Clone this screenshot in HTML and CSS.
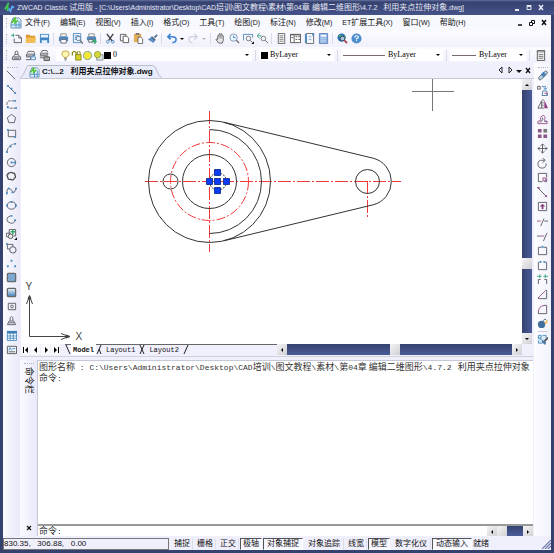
FILE: index.html
```html
<!DOCTYPE html>
<html lang="zh-CN">
<head>
    <meta charset="UTF-8">
    <meta name="viewport" content="width=device-width, initial-scale=1.0">
    <title>ZWCAD Classic</title>
    <link rel="stylesheet" href="styles.css">
</head>
<body>

<div class="window">
    <header class="title-bar">
        <svg class="logo" viewBox="0 0 12 12"><path d="M1 8l3-5v7M4 3l1-2" stroke="#3fc452" stroke-width="2" fill="none"/><path d="M5 7l2 3 2-5 2 1" stroke="#59a9ee" stroke-width="2" fill="none"/></svg>
        <h1><span class="latin">ZWCAD Classic </span>试用版<span class="latin"> - [C:\Users\Administrator\Desktop\CAD</span>培训<span class="latin">\</span>图文教程<span class="latin">\</span>素材<span class="latin">\</span>第<span class="latin">04</span>章 编辑二维图形<span class="latin">\4.7.2 &nbsp; </span>利用夹点拉伸对象<span class="latin">.dwg]</span></h1>
        <div class="window-buttons">
            <button type="button" aria-label="Minimize"><svg viewBox="0 0 8 8"><path d="M2 6h4" stroke="currentColor" stroke-width="2"/></svg></button>
            <button type="button" aria-label="Maximize"><svg viewBox="0 0 8 8"><path d="M2 2.5h4v3H2z" stroke="currentColor" fill="none"/><path d="M1.5 1.5h5" stroke="currentColor"/></svg></button>
            <button type="button" aria-label="Close"><svg viewBox="0 0 8 8"><path d="M2 1l4 5M6 1L2 6" stroke="currentColor" stroke-width="1.5"/></svg></button>
        </div>
    </header>

    <nav class="menu-bar">
        <span class="grip"></span>
        <svg class="doc-icon" viewBox="0 0 12 12"><path d="M3 1h6l2 2v8H1V6z" fill="#e4f2ff" stroke="#7393b4"/><path d="M1 8h10M6 5v6M9 4v7" stroke="#4c91c7"/><path d="M2 6l3-5v5l3-3" stroke="#4fc32e" stroke-width="1.5" fill="none"/></svg>
        <button type="button">文件<span class="latin">(F)</span></button>
        <button type="button">编辑<span class="latin">(E)</span></button>
        <button type="button">视图<span class="latin">(V)</span></button>
        <button type="button">插入<span class="latin">(I)</span></button>
        <button type="button">格式<span class="latin">(O)</span></button>
        <button type="button">工具<span class="latin">(T)</span></button>
        <button type="button">绘图<span class="latin">(D)</span></button>
        <button type="button">标注<span class="latin">(N)</span></button>
        <button type="button">修改<span class="latin">(M)</span></button>
        <button type="button"><span class="latin">ET</span>扩展工具<span class="latin">(X)</span></button>
        <button type="button">窗口<span class="latin">(W)</span></button>
        <button type="button">帮助<span class="latin">(H)</span></button>
        <div class="window-buttons">
            <button type="button" aria-label="Minimize drawing"><svg viewBox="0 0 8 8"><path d="M2 6h4" stroke="currentColor" stroke-width="1.5"/></svg></button>
            <button type="button" aria-label="Restore drawing"><svg viewBox="0 0 8 8"><path d="M3.5 3V1.5h3v3H5M1.5 3.5h3v3h-3z" stroke="currentColor" fill="none"/></svg></button>
            <button type="button" aria-label="Close drawing"><svg viewBox="0 0 8 8"><path d="M2 1l4 5M6 1L2 6" stroke="currentColor" stroke-width="1.5"/></svg></button>
        </div>
    </nav>

    <div class="toolbar standard">
        <span class="grip"></span>
        <button type="button" aria-label="New"><svg viewBox="0 0 12 12"><path class="k" d="M5 2.5h3.5l3 3v5h-8V6"/><path class="k" d="M8.5 2.5v3h3"/><path class="g" d="M0 2.5h4M2.5 .5v4"/></svg></button>
        <button type="button" aria-label="Open"><svg viewBox="0 0 12 12"><path d="M1 2h4l1 1h5v8H1z" fill="#d99a2e"/><path d="M1 5h11l-1 6H1z" fill="#f3bd55"/></svg></button>
        <button type="button" aria-label="Save"><svg viewBox="0 0 12 12"><path d="M1 1h10v10H1z" fill="#4287c3"/><path d="M2 2h8v3H2zM3 8h6v3H3z" fill="#e6f3fd"/></svg></button>
        <span class="divider"></span>
        <button type="button" aria-label="Print"><svg viewBox="0 0 12 12"><path d="M3 1h6v3H3z" fill="#fff" stroke="#888"/><path d="M1 4h10v5H1z" fill="#4c8ac4"/><path d="M3 7h6v4H3z" fill="#fff" stroke="#667"/></svg></button>
        <button type="button" aria-label="Print preview"><svg viewBox="0 0 12 12"><path class="b" d="M1.5 .5h8v10h-8zM3 3h5M3 5h3M3 7h2"/><circle cx="7" cy="6" r="2.5" fill="#e0f0ff" stroke="#637894"/><path d="M9 8l3 4" stroke="#777" stroke-width="1.5"/></svg></button>
        <button type="button" aria-label="Plot"><svg viewBox="0 0 12 12"><path d="M3 1h6v3H3z" fill="#fff" stroke="#888"/><path d="M1 4h10v4H1z" fill="#5389bc"/><path d="M3 7h5v3H3z" fill="#fff" stroke="#667"/><path d="M6 9h5M9 7l2 2-2 3" stroke="#35a66c" fill="none" stroke-width="1.5"/></svg></button>
        <span class="divider"></span>
        <button type="button" aria-label="Cut"><svg viewBox="0 0 12 12"><path d="M2 1l6 8M9 1L4 8" stroke="#444" stroke-width="1.5"/><g class="b"><circle cx="3" cy="9.5" r="1.5"/><circle cx="8.5" cy="9.5" r="1.5"/></g></svg></button>
        <button type="button" aria-label="Copy"><svg viewBox="0 0 12 12"><path d="M1.5 1.5h6v7h-6z" class="k"/><path d="M4.5 3.5h4l2 2v5h-6z" fill="#fff" stroke="#555"/></svg></button>
        <button type="button" aria-label="Paste"><svg viewBox="0 0 12 12"><path d="M1 1h8v9H1z" fill="#e4ae55"/><path d="M3 0h4v2H3z" fill="#777"/><path d="M5.5 4.5h3l2 2v5h-5z" fill="#fff" stroke="#666"/></svg></button>
        <button type="button" aria-label="Match properties"><svg viewBox="0 0 12 12"><path d="M11 2L8 5" stroke="#5d7596" stroke-width="2"/><path d="M5 4l4 4-2 3-6-4z" fill="#5f8fc2"/><path d="M5 4l4 4" stroke="#4d607c" stroke-width="1.5"/></svg></button>
        <span class="divider"></span>
        <button type="button" aria-label="Undo"><svg viewBox="0 0 12 12"><path d="M2 4h5q4 0 4 3t-4 3.500M5 1L2 4l3 3" stroke="#3982d1" stroke-width="1.7" fill="none"/></svg></button>
        <button type="button" class="caret" aria-label="Undo list"><svg viewBox="0 0 6 6"><path d="M1 2h4L3 4z"/></svg></button>
        <button type="button" aria-label="Redo" disabled><svg viewBox="0 0 12 12"><path d="M10 4H5Q1 4 1 7t4 3.500M7 1l3 3-3 3" stroke="#d0d3df" stroke-width="1.5" fill="none"/></svg></button>
        <button type="button" class="caret" aria-label="Redo list" disabled><svg viewBox="0 0 6 6"><path d="M1 2h4L3 4z" fill="#b7b7c2"/></svg></button>
        <span class="divider"></span>
        <button type="button" aria-label="Pan"><svg viewBox="0 0 12 12"><path d="M3 7V3q1-1 1.500 0V1q1-1 1.500 0 1-1 1.500 0v2q1-1 1.500 0v5l-1 3H4L1 7q1-1 2 0z" fill="#e8e7e8" stroke="#5d5d64"/><path d="M4.500 3v3M6 2v4M7.500 3v3" stroke="#777" stroke-width=".7"/></svg></button>
        <button type="button" aria-label="Zoom realtime"><svg viewBox="0 0 12 12"><circle cx="5" cy="5" r="4" fill="#e7f3ff" stroke="#8397ae"/><path d="M5 3v2h2" stroke="#3d82bf" fill="none"/><path d="M8 8l3 3" stroke="#777" stroke-width="1.5"/></svg></button>
        <button type="button" aria-label="Zoom window"><svg viewBox="0 0 12 12"><path class="b" d="M.5 8V1.5h10V5"/><circle cx="6" cy="6" r="2.5" fill="#eef5fc" stroke="#777"/><path class="k" d="M8 8l2 2"/><path d="M12 9v3H9z" fill="#111"/></svg></button>
        <button type="button" aria-label="Zoom previous"><svg viewBox="0 0 12 12"><circle cx="7" cy="6" r="2.5" fill="#eef5fc" stroke="#777"/><path class="k" d="M9 8l3 3"/><path class="g" d="M0 3h5M3 0L0 3l3 3"/></svg></button>
        <span class="divider"></span>
        <button type="button" aria-label="Properties"><svg viewBox="0 0 12 12"><path d="M2.5 .5h7v11h-7z" fill="#eee" stroke="#666"/><path d="M4 3h4M4 5h4M4 7h4M4 9h4" stroke="#888"/></svg></button>
        <button type="button" aria-label="Design center"><svg viewBox="0 0 12 12"><path d="M.5 1.5h11v9H.5z" fill="#fff" stroke="#555"/><path d="M.5 2h11M4.5 2v8M6 4h2M6 7h2M9 4h2M9 7h2M1.500 5h2" stroke="#555"/></svg></button>
        <button type="button" aria-label="Tool palettes"><svg viewBox="0 0 12 12"><path d="M2.5 .5h8v11h-8z" fill="#f0f7fc" stroke="#666"/><path d="M2 1v10M10 0v3" stroke="#4b8bc2" stroke-width="2"/><path d="M5 4h3M5 7h3" stroke="#9ac"/></svg></button>
        <button type="button" aria-label="Calculator"><svg viewBox="0 0 12 12"><path d="M1.5 .5h9v11h-9z" fill="#91b5e4" stroke="#5d82ba"/><path d="M3 3h6" stroke="#fff" stroke-width="2"/><path d="M3 6h6M3 8h6M3 10h6" stroke="#e5f0fb" stroke-dasharray="1 1"/></svg></button>
        <span class="divider"></span>
        <button type="button" aria-label="Find online"><svg viewBox="0 0 12 12"><circle cx="5" cy="5" r="4.5" fill="#2674b3"/><path d="M2 2l4 1-2 3zM7 4l2-1v4H7z" fill="#52b758"/><circle cx="6" cy="6" r="2.5" fill="#a6c8e5" stroke="#445"/><path d="M8 8l3 3" stroke="#a94450" stroke-width="2"/></svg></button>
        <button type="button" aria-label="Help"><svg viewBox="0 0 12 12"><circle cx="6" cy="6" r="5.5" fill="#4c8dce"/><path d="M4 5q0-2 2-2t2 1.500Q8 5.500 6 6v1M6 8v1" stroke="#fff" stroke-width="1.3" fill="none"/></svg></button>
    </div>

    <div class="toolbar layers">
        <span class="grip"></span>
        <button type="button" aria-label="Layer manager"><svg viewBox="0 0 12 12"><path class="k" d="M1.5 7.5h9v3h-9zM3 7l1-2h4l1 2M4.5 5V2q2-2 3 0v3M3 9h6"/></svg></button>
        <button type="button" aria-label="Layer previous"><svg viewBox="0 0 12 12"><path class="k" d="M2.5 3.5l1-2h6l1 2v3M1.5 4.5h8v2h-8zM1 7.5h5v3H1"/><path class="b" d="M6.5 7.5h5v3h-5zM8 6h3"/></svg></button>
        <button type="button" aria-label="Layer states"><svg viewBox="0 0 12 12"><path class="k" d="M2.5 2.5l1-2h5l1 2M1.5 3.5h8v2h-8zM1 6.5h8v2H1"/><path d="M5.5 7.5h6v4h-6z" fill="#aaa" stroke="#555"/></svg></button>
        <label class="combo layer-combo">
            <svg class="state" viewBox="0 0 12 12"><path d="M6 1q-4 0-4 3 0 2 2.500 4h3Q10 6 10 4q0-3-4-3z" fill="#fff6b2" stroke="#c19d38"/><path d="M4.5 9.5h3M5 11h2" stroke="#666"/></svg>
            <svg class="state" viewBox="0 0 12 12"><path d="M1.5 6V3q2-3 4 0v4" fill="none" stroke="#91901e" stroke-width="1.5"/><path d="M5 5h6v6H5z" fill="#d8d329" stroke="#8c8920"/><path d="M7 5V2h3v3" stroke="#8c8920" fill="none"/></svg>
            <svg class="state" viewBox="0 0 12 12"><circle cx="6" cy="6" r="4.5" fill="#f5e738" stroke="#6e9b9e"/></svg>
            <svg class="state" viewBox="0 0 12 12"><path d="M4 5h7v6H4z" fill="#dfe5e8" stroke="#838c93"/><circle cx="5" cy="5" r="3.5" fill="#d8d53b" stroke="#92a53b"/></svg>
            <span class="swatch"></span>
            <select aria-label="Layer"><option>0</option></select>
            <svg class="arrow" viewBox="0 0 6 6"><path d="M1 2h4L3 4z"/></svg>
        </label>
        <span class="divider"></span>
        <label class="combo color-combo">
            <span class="swatch"></span>
            <select aria-label="Color"><option>ByLayer</option></select>
            <svg class="arrow" viewBox="0 0 6 6"><path d="M1 2h4L3 4z"/></svg>
        </label>
        <span class="divider"></span>
        <label class="combo linetype-combo">
            <span class="sample"></span>
            <select aria-label="Linetype"><option>ByLayer</option></select>
            <svg class="arrow" viewBox="0 0 6 6"><path d="M1 2h4L3 4z"/></svg>
        </label>
        <span class="divider"></span>
        <label class="combo weight-combo">
            <span class="sample"></span>
            <select aria-label="Lineweight"><option>ByLayer</option></select>
            <svg class="arrow" viewBox="0 0 6 6"><path d="M1 2h4L3 4z"/></svg>
        </label>
        <span class="divider"></span>
        <button type="button" aria-label="Plot style"><svg viewBox="0 0 12 12"><path d="M2.5 .5h8v11h-8z" fill="#eee" stroke="#555"/><path d="M2 2h9M4 5h5M4 7h5M4 9h5" stroke="#777"/></svg></button>
    </div>

    <main class="workspace">
        <!-- draw toolbar -->
        <aside class="side-bar">
            <div class="tools">
                <span class="grip-top"></span>
                <button type="button" aria-label="Line"><svg viewBox="0 0 12 12"><path class="k" d="M1 1l9 9"/></svg></button>
                <button type="button" aria-label="Construction line"><svg viewBox="0 0 12 12"><path class="k" d="M1 1l10 10"/><path class="bd" d="M1 1h2v2H1zM5 4h2v2H5zM9 9h2v2H9z"/></svg></button>
                <button type="button" aria-label="Polyline"><svg viewBox="0 0 12 12"><path class="k" d="M9 2H4Q1 2 1 6t4 4h5" stroke-dasharray="3 1"/><path class="bd" d="M9 1h2v2H9zM1 8h2v2H1zM10 9h2v2h-2z"/></svg></button>
                <button type="button" aria-label="Polygon"><svg viewBox="0 0 12 12"><path class="k" d="M6 1.5L10.5 5 9 10.5H3L1.5 5z"/></svg></button>
                <button type="button" aria-label="Rectangle"><svg viewBox="0 0 12 12"><path class="k" d="M2.5 2.5h8v7h-8z"/><path class="bd" d="M1 1h2v2H1zM9 9h2v2H9z"/></svg></button>
                <button type="button" aria-label="Arc"><svg viewBox="0 0 12 12"><path class="k" d="M1 11q1-8 9-9" stroke-dasharray="5 1"/><path class="bd" d="M9 1h2v2H9zM4 4h2v2H4zM0 10h2v2H0z"/></svg></button>
                <button type="button" aria-label="Circle"><svg viewBox="0 0 12 12"><circle class="k" cx="6" cy="6" r="4.5"/><path class="b" d="M6 6h4"/><path class="bd" d="M5 5h2v2H5zM9 5h2v2H9z"/></svg></button>
                <button type="button" aria-label="Revision cloud"><svg viewBox="0 0 12 12"><path d="M4 2q2-1 3 0 3 0 3 3 1 2-1 3-1 3-4 1-3 1-3-2-2-3 0-3 0-2 2-2z" fill="none" stroke="#444" stroke-width="1.3"/></svg></button>
                <button type="button" aria-label="Spline"><svg viewBox="0 0 12 12"><path class="k" d="M1 9Q1 2 4 4t4 4 3-5"/><path class="bd" d="M0 8h2v2H0zM2 3h2v2H2zM6 7h2v2H6zM10 3h2v2h-2z"/></svg></button>
                <button type="button" aria-label="Ellipse"><svg viewBox="0 0 12 12"><ellipse class="k" cx="6" cy="6" rx="4.5" ry="4"/><path class="bd" d="M0 5h2v2H0zM5 1h2v2H5zM10 5h2v2h-2z"/></svg></button>
                <button type="button" aria-label="Ellipse arc"><svg viewBox="0 0 12 12"><path class="k" d="M5 2Q1 3 1 6t4 4 5-4"/><path class="bd" d="M5 1h2v2H5zM9 6h2v2H9z"/></svg></button>
                <button type="button" aria-label="Insert block"><svg viewBox="0 0 12 12"><path class="k" d="M3.5 6V.5h7v7H8M.5 4.5h4v4h-4z"/><path d="M5 3h5M7.5 1v5" stroke="#2fa760" stroke-width="1.5"/><circle cx="5" cy="8" r="2.5" fill="#eee" stroke="#555"/><path d="M12 9v3H9z" fill="#111"/></svg></button>
                <button type="button" aria-label="Make block"><svg viewBox="0 0 12 12"><path class="k" d="M1.5 1.5h6v5h-6z"/><circle cx="7.5" cy="7.5" r="3.5" fill="#eef" stroke="#555"/><path class="bd" d="M0 0h2v2H0z"/></svg></button>
                <button type="button" aria-label="Point"><svg viewBox="0 0 12 12"><path class="bd" d="M5 2h2v2H5zM1 8h2v2H1zM9 8h2v2H9z"/></svg></button>
                <button type="button" aria-label="Hatch"><svg viewBox="0 0 12 12"><rect x="1.5" y="1.5" width="9" height="9" rx="1" fill="#78a3ce" stroke="#666" stroke-width="1.4"/><path d="M2 5l3-3M2 9l7-7M5 10l5-5" stroke="#9fc3e3" stroke-width=".6"/></svg></button>
                <button type="button" aria-label="Gradient"><svg viewBox="0 0 12 12"><defs><linearGradient id="fade" x2="0" y2="1"><stop stop-color="#f1f7fd"/><stop offset="1" stop-color="#3c7eb7"/></linearGradient></defs><rect x="1.5" y="1.5" width="9" height="9" rx="1" fill="url(#fade)" stroke="#666" stroke-width="1.4"/></svg></button>
                <button type="button" aria-label="Region"><svg viewBox="0 0 12 12"><path class="k" d="M2.5 2.5h8v7h-8z"/><circle class="k" cx="6.5" cy="6" r="1.5"/></svg></button>
                <button type="button" aria-label="Wipeout"><svg viewBox="0 0 12 12"><path class="k" d="M3.5 6.5h5l2 4h-9zM4.5 6V3q1.500-3 3 0v3M3 8.5h6"/></svg></button>
                <button type="button" aria-label="Table"><svg viewBox="0 0 12 12"><path d="M1 1h11v11H1z" fill="#fff"/><path d="M1 1h11v3H1z" fill="#3b7db5"/><path class="b" d="M1.5 4v7.500h10V4M1 6.500h10M1 9h10M4.500 4v7M8 4v7"/></svg></button>
                <button type="button" aria-label="Text"><svg viewBox="0 0 12 12"><path d="M1.5 2.5h10v8h-10z" fill="#eef5fb" stroke="#555"/><path class="b" d="M3 7l1.500-3L6 7M7 5h3"/><path class="k" d="M3 8.5h7"/></svg></button>
            </div>
        </aside>

        <div class="center">
            <section class="document">
                <div class="doc-tabs">
                    <svg class="tab-edge" viewBox="0 0 9 13"><path d="M0 13Q3 12 5 6T9 .5V13z" fill="#e8ebfa"/><path d="M0 12.5Q3 12 5 6T9 .5" fill="none" stroke="#b9bdcc"/></svg>
                    <button type="button" class="doc-tab">
                        <svg viewBox="0 0 12 12"><path d="M3 1h6l2 2v8H1V6z" fill="#e4f2ff" stroke="#7393b4"/><path d="M1 8h10M6 5v6M9 4v7" stroke="#4c91c7"/><path d="M2 6l3-5v5l3-3" stroke="#4fc32e" stroke-width="1.5" fill="none"/></svg>
                        <span>C:\...2 &nbsp; 利用夹点拉伸对象.dwg</span>
                    </button>
                    <svg class="tab-edge" viewBox="0 0 9 13"><path d="M0 .5Q3 1 4 6t5 7H0z" fill="#e8ebfa"/><path d="M0 .5Q3 1 4 6t5 6.500" fill="none" stroke="#b9bdcc"/></svg>
                    <div class="tab-buttons">
                        <button type="button" aria-label="Previous drawing"><svg viewBox="0 0 8 8"><path d="M5 1v6L2 4z" fill="none" stroke="#222"/></svg></button>
                        <button type="button" aria-label="Next drawing"><svg viewBox="0 0 8 8"><path d="M3 1v6l3-3z" fill="none" stroke="#222"/></svg></button>
                        <button type="button" aria-label="Drawing list"><svg viewBox="0 0 8 8"><path d="M1 4h6L4 7z" fill="#111"/></svg></button>
                        <button type="button" aria-label="Close tab"><svg viewBox="0 0 8 8"><path d="M2 2l4 5M6 2L2 7" stroke="#111" stroke-width="1.3"/></svg></button>
                    </div>
                </div>

                <div class="view">
                    <svg class="drawing" viewBox="21 79 501 265" preserveAspectRatio="xMinYMin meet">
                        <g class="center-line">
                            <path d="M145 181.5h256" stroke-dasharray="13 2 2 2"/>
                            <path d="M209.5 111v141" stroke-dasharray="13 2 2 2"/>
                            <path d="M367.5 181v36" stroke-dasharray="13 2 2 2"/>
                            <circle cx="209.5" cy="181.5" r="39" stroke-dasharray="9 2 2 2"/>
                        </g>
                        <g class="outline">
                            <circle cx="209.5" cy="181.5" r="61"/>
                            <circle cx="209.5" cy="181.5" r="27"/>
                            <circle cx="170.5" cy="181.5" r="7.5"/>
                            <circle cx="367.5" cy="181.5" r="12"/>
                            <path d="M209.5 129.5a52 52 0 0 1 0 104"/>
                            <path d="M223.8 122.2L373.1 158.2a24 24 0 0 1 0 46.6L223.8 240.8"/>
                            <circle cx="218" cy="181.5" r="8.5" stroke-dasharray="2 1"/>
                        </g>
                        <path class="grips" d="M206.5 178.5h6v6h-6zM214.5 178.500h6v6h-6zM223.500 178.500h6v6h-6zM214.500 169.500h6v6h-6zM214.500 187.500h6v6h-6z"/>
                        <path class="cursor" d="M412 91.5h42M432.5 79v32"/>
                        <g class="ucs">
                            <path d="M29.5 297v39.500H68M26.5 304l3-8 3 8M61 333.5l8 3-8 3"/>
                            <path d="M28 299l1.500-3.500 1.500 3.500zM66 335l4 1.500-4 1.500z"/>
                            <text x="25.5" y="290">Y</text>
                            <text x="75.5" y="340">X</text>
                        </g>
                    </svg>
                    <div class="scroll vertical">
                        <button type="button" aria-label="Scroll up"><svg viewBox="0 0 8 8"><path d="M2 5h4L4 3z"/></svg></button>
                        <span class="track before"></span>
                        <span class="thumb"></span>
                        <span class="track"></span>
                        <button type="button" aria-label="Scroll down"><svg viewBox="0 0 8 8"><path d="M2 3h4L4 5z"/></svg></button>
                    </div>
                </div>

                <div class="sheet-bar">
                    <div class="sheet-nav">
                        <button type="button" aria-label="First sheet"><svg viewBox="0 0 8 8"><path d="M6 1v6L3 4z"/><path d="M1 1h1v6H1z"/></svg></button>
                        <button type="button" aria-label="Previous sheet"><svg viewBox="0 0 8 8"><path d="M5 1v6L2 4z"/></svg></button>
                        <button type="button" aria-label="Next sheet"><svg viewBox="0 0 8 8"><path d="M3 1v6l3-3z"/></svg></button>
                        <button type="button" aria-label="Last sheet"><svg viewBox="0 0 8 8"><path d="M2 1v6l3-3z"/><path d="M6 1h1v6H6z"/></svg></button>
                    </div>
                    <div class="sheets">
                        <svg class="slash" viewBox="0 0 6 10"><path d="M1 0l4 9"/></svg>
                        <button type="button" class="active">Model</button>
                        <svg class="slash" viewBox="0 0 6 10"><path d="M5 0L1 9M3 4l2 5"/></svg>
                        <button type="button">Layout1</button>
                        <svg class="slash" viewBox="0 0 6 10"><path d="M5 0L1 9M1 0l4 9"/></svg>
                        <button type="button">Layout2</button>
                        <svg class="slash" viewBox="0 0 6 10"><path d="M5 0L1 9"/></svg>
                    </div>
                    <div class="scroll horizontal">
                        <button type="button" aria-label="Scroll left"><svg viewBox="0 0 8 8"><path d="M5 2v4L3 4z"/></svg></button>
                        <span class="track"></span>
                        <span class="thumb"></span>
                        <span class="track"></span>
                        <button type="button" aria-label="Scroll right"><svg viewBox="0 0 8 8"><path d="M3 2v4l2-2z"/></svg></button>
                    </div>
                </div>
            </section>

            <section class="command">
                <div class="command-side">
                    <span class="grip-top"></span>
                    <span class="command-title">命令栏</span>
                    <button type="button" aria-label="Close command bar"><svg viewBox="0 0 8 8"><path d="M2 2l4 4M6 2L2 6" stroke="#111" stroke-width="1.2"/></svg></button>
                </div>
                <div class="command-body">
                    <div class="history">
                        <p>图形名称<span class="mono"> : C:\Users\Administrator\Desktop\CAD</span>培训<span class="mono">\</span>图文教程<span class="mono">\</span>素材<span class="mono">\</span>第<span class="mono">04</span>章 编辑二维图形<span class="mono">\4.7.2</span> &nbsp; 利用夹点拉伸对象</p>
                        <p>命令<span class="mono">:</span></p>
                    </div>
                    <div class="prompt">
                        <label for="commandInput">命令<span class="mono">:</span></label>
                        <input type="text" id="commandInput">
                        <div class="scroll horizontal">
                            <button type="button" aria-label="Scroll left"><svg viewBox="0 0 8 8"><path d="M5 2v4L3 4z"/></svg></button>
                            <span class="thumb"></span>
                            <span class="track"></span>
                            <button type="button" aria-label="Scroll right"><svg viewBox="0 0 8 8"><path d="M3 2v4l2-2z"/></svg></button>
                        </div>
                    </div>
                </div>
            </section>
        </div>

        <!-- modify toolbar -->
        <aside class="side-bar right">
            <div class="tools modify">
                <span class="grip-top"></span>
                <button type="button" aria-label="Erase"><svg viewBox="0 0 12 12"><path d="M2 8l6-6q2-2 3 0t-1 3l-5 5q-2 2-3 0t0-2z" fill="#b9d3e8" stroke="#666"/><path d="M4 5l3-3 3 3-3 3z" fill="#4682ba"/></svg></button>
                <button type="button" aria-label="Copy object"><svg viewBox="0 0 12 12"><path class="k" d="M.5 1.5h3v3h-3z"/><path class="b" d="M5 1.5h4V5M7 3l2 2 2-2"/><path d="M6.5 6.5h4l1 5h-6z" fill="#fff" stroke="#467bae"/><path class="p" d="M8 9h3v2"/></svg></button>
                <button type="button" aria-label="Mirror"><svg viewBox="0 0 12 12"><path class="k" d="M5 2L1 10h4z"/><path class="k" d="M6.5 0v12" stroke-dasharray="2 1"/><path d="M8 1l4 9H8z" fill="#8f3f82"/></svg></button>
                <button type="button" aria-label="Offset"><svg viewBox="0 0 12 12"><path class="p" d="M1 10.5V8l3-1V4q3-5 5 0-3 4 2 4v2.500z"/><path class="k" d="M3 9l2-1q2-2 1-4M8 8h3"/></svg></button>
                <button type="button" aria-label="Array"><svg viewBox="0 0 12 12"><path d="M1 1h4v4H1zM1 7h4v4H1zM7 7h4v4H7z" fill="#8c5785"/><path d="M7 1h4v4H7z" fill="#777"/></svg></button>
                <button type="button" aria-label="Move"><svg viewBox="0 0 12 12"><path class="k" d="M6 1v10M1 6h10M4 3l2-2 2 2M4 9l2 2 2-2M3 4L1 6l2 2M9 4l2 2-2 2"/></svg></button>
                <button type="button" aria-label="Rotate"><svg viewBox="0 0 12 12"><path class="k" d="M10 6q0 5-4 5-5 0-5-4.500T6 2.500h2M6 0l3 2.500L6 5"/></svg></button>
                <button type="button" aria-label="Scale"><svg viewBox="0 0 12 12"><path class="k" d="M6 10.5H1.5v-9h9V6M10.5 7v3.500H8"/><path class="p" d="M6.5 6.5h3v3h-3z"/></svg></button>
                <button type="button" aria-label="Stretch"><svg viewBox="0 0 12 12"><path class="k" d="M1 1l10 10"/><path d="M0 0h3v2H1zM9 9h2v2H9z" fill="#9a4e8d"/></svg></button>
                <button type="button" aria-label="Lengthen"><svg viewBox="0 0 12 12"><path class="k" d="M1.5 1.5h9v9h-9z"/><path d="M6 3l3 3H7v3H5V6H3z" fill="#8c3f80"/></svg></button>
                <button type="button" aria-label="Trim"><svg viewBox="0 0 12 12"><path class="p" d="M0 5.5h4"/><path class="k" d="M4 11l4-9M8 5.5h4" stroke-dasharray="9 1"/></svg></button>
                <button type="button" aria-label="Extend"><svg viewBox="0 0 12 12"><path class="k" d="M7 11l4-9M0 5.5h4"/><path class="p" d="M4 5.5h4"/></svg></button>
                <button type="button" aria-label="Break at point"><svg viewBox="0 0 12 12"><path class="k" d="M5 2.5H1.5v8h9v-8H7"/><path class="bd" d="M5 1h2v2H5z"/></svg></button>
                <button type="button" aria-label="Break"><svg viewBox="0 0 12 12"><path class="k" d="M3 2.5H1.5v8h9v-8H9"/><path class="bd" d="M3 1h2v2H3zM7 1h2v2H7z"/></svg></button>
                <button type="button" aria-label="Join"><svg viewBox="0 0 12 12"><path class="k" d="M1.5 11V6H4M10.5 11V6H8"/><path class="g" d="M0 2.5h5M12 2.5H7M3 .5v4M9 .5v4"/></svg></button>
                <button type="button" aria-label="Chamfer"><svg viewBox="0 0 12 12"><path class="k" d="M9 1.5h1.5v9h-9V9"/><path class="p" d="M1 10l8-8"/></svg></button>
                <button type="button" aria-label="Fillet"><svg viewBox="0 0 12 12"><path class="k" d="M8 1.5h2.500v9h-9V8"/><path class="p" d="M1.5 9q0-7 7-7.500"/></svg></button>
                <button type="button" aria-label="Explode"><svg viewBox="0 0 12 12"><circle cx="5" cy="7" r="4" fill="#41709d"/><path d="M7 3q1-3 3-1" stroke="#466785" fill="none"/><path d="M10 2l2 1-1 1 1 2-2-1-1 2-1-2 2-1z" fill="#efb939"/></svg></button>
                <span class="rule"></span>
                <button type="button" aria-label="Edit hatch"><svg viewBox="0 0 12 12"><path d="M1.5 1.5h8v8h-8z" fill="#d9eaf7"/><path class="b" d="M1.5 1.5h3v3h-3zM6 1.5h4v3M1.5 7v3h4M1 4l8 5"/><path d="M12 4L8 8" stroke="#555" stroke-width="2"/><path d="M6 7l4 2-1 3-4-3z" fill="#467aa8"/></svg></button>
            </div>
        </aside>
    </main>

    <footer class="status-bar">
        <output class="coords">830.35, &nbsp; 306.88, &nbsp; 0.00</output>
        <button type="button">捕捉</button>
        <button type="button">栅格</button>
        <button type="button">正交</button>
        <button type="button" class="pressed">极轴</button>
        <button type="button" class="pressed wide">对象捕捉</button>
        <button type="button" class="wide">对象追踪</button>
        <button type="button">线宽</button>
        <button type="button" class="pressed">模型</button>
        <button type="button" class="wide">数字化仪</button>
        <button type="button" class="pressed wide">动态输入</button>
        <span class="ready">就绪</span>
        <svg class="resize" viewBox="0 0 9 9"><path d="M0 9l9-9M3 9l6-6M6 9l3-3" stroke="#6874a5" stroke-width="1.2"/></svg>
    </footer>
</div>

</body>
</html>
```

FILE: styles.css
```css
* {
    box-sizing: border-box;
}

body {
    margin: 0;
    font-family: "Liberation Sans", "Noto Sans CJK SC", sans-serif;
    font-size: 8px;
    line-height: 12px;
    color: #111;
}

button {
    padding: 0;
    border: none;
    background: none;
    font: inherit;
    color: inherit;
    white-space: nowrap;
}

svg {
    display: block;
    flex-shrink: 0;
}

.window {
    height: 100vh;
    display: flex;
    flex-direction: column;
    background-color: #f0f0fd;
    border: solid #35416f;
    border-width: 0 3px 3px;
}

/* title bar and menu */
.title-bar {
    height: 15px;
    margin: 0 -3px;
    padding: 0 4px;
    display: flex;
    align-items: center;
    background: linear-gradient(#6570a0, #35416f 2px, #46538a);
    color: #e6e8f2;
}

.logo {
    width: 11px;
    height: 11px;
    margin-right: 2px;
}

h1 {
    margin: 0;
    font-size: 8px;
    font-weight: normal;
    white-space: nowrap;
}

.latin {
    font-size: 7px;
}

.window-buttons {
    display: flex;
    gap: 4px;
    margin-left: auto;
}

.window-buttons svg,
.tab-buttons svg,
.scroll svg,
.sheet-nav svg,
.command-side svg {
    width: 8px;
    height: 8px;
}

.title-bar .window-buttons {
    padding-right: 5px;
}

.menu-bar {
    height: 15px;
    padding: 0 3px;
    display: flex;
    align-items: center;
    gap: 10px;
    background-color: #f8f8ff;
}

.menu-bar .grip {
    margin-right: -8px;
}

.menu-bar .doc-icon {
    margin-right: -7px;
}

.doc-icon {
    width: 12px;
    height: 12px;
}

.grip {
    width: 2px;
    height: 10px;
    margin-right: 1px;
    border-left: 1px dotted #b4b6c6;
}

/* horizontal toolbars */
.toolbar {
    height: 17px;
    padding-left: 3px;
    display: flex;
    align-items: center;
    background: linear-gradient(#fbfbff, #f1f1fd);
}

.toolbar button {
    width: 14px;
    height: 14px;
    display: flex;
    align-items: center;
    justify-content: center;
}

.toolbar button svg {
    width: 11px;
    height: 11px;
}

.toolbar .caret {
    width: 8px;
}

.toolbar .caret svg,
.arrow {
    width: 6px;
    height: 6px;
}

.divider {
    width: 1px;
    height: 11px;
    margin: 0 2px;
    background-color: #d9dae8;
}

.layers {
    height: 16px;
}

.layers .divider {
    margin: 0 3px;
}

.combo {
    height: 12px;
    display: flex;
    align-items: center;
    padding: 0 2px;
    background-color: #fff;
}

.combo select {
    flex: 1;
    min-width: 0;
    height: 12px;
    padding: 0;
    border: none;
    background: none;
    appearance: none;
    font: 8px/12px "Liberation Serif", serif;
    color: #000;
}

.layer-combo {
    width: 196px;
    margin-left: 5px;
    padding-left: 4px;
}

.state {
    width: 11px;
    height: 11px;
}

.swatch {
    width: 7px;
    height: 7px;
    margin-right: 2px;
    background-color: #000;
}

.color-combo {
    width: 75px;
}

.sample {
    width: 42px;
    height: 1px;
    margin-right: 3px;
    background-color: #776a70;
}

.linetype-combo {
    width: 102px;
}

.weight-combo {
    width: 76px;
}

.weight-combo .sample {
    width: 24px;
}

.k {
    fill: none;
    stroke: #5c5c64;
}

.b {
    fill: none;
    stroke: #4c8cc1;
}

.bd {
    fill: #4c8cc1;
}

.g {
    fill: none;
    stroke: #35a275;
}

.p {
    fill: none;
    stroke: #9a4e8d;
}

/* workspace */
.workspace {
    flex: 1;
    min-height: 0;
    display: flex;
}

.side-bar {
    width: 17px;
    background: linear-gradient(90deg, #fafaff, #e9e9fa);
}

.side-bar.right {
    background: linear-gradient(90deg, #fdfdff, #f2f2fc);
}

.tools {
    height: 294px;
    padding-top: 4px;
    display: flex;
    flex-direction: column;
    align-items: center;
    justify-content: space-between;
}

.tools.modify {
    height: 284px;
}

.tools svg {
    width: 11px;
    height: 11px;
}

.tools button {
    width: 14px;
    height: 14px;
    display: flex;
    align-items: center;
    justify-content: center;
}

.grip-top {
    width: 10px;
    height: 1px;
    border-top: 1px dotted #b4b6c6;
}

.rule {
    width: 10px;
    height: 1px;
    background-color: #c9cad8;
}

.center {
    flex: 1;
    min-width: 0;
    display: flex;
    flex-direction: column;
    gap: 3px;
}

.document {
    flex: 1;
    min-height: 0;
    display: flex;
    flex-direction: column;
    padding-bottom: 1px;
    border-bottom: 1px solid #cfd1dc;
}

.doc-tabs {
    height: 16px;
    display: flex;
    align-items: flex-end;
    border-bottom: 1px solid #c5c8d6;
}

.tab-edge {
    width: 9px;
    height: 13px;
}

.doc-tab {
    height: 13px;
    display: flex;
    align-items: center;
    gap: 2px;
    border-top: 1px solid #b9bdcc;
    background-color: #e8ebfa;
    font-weight: bold;
}

.doc-tab svg {
    width: 11px;
    height: 11px;
}

.tab-buttons {
    margin-left: auto;
    padding: 0 2px 4px 0;
    display: flex;
    gap: 1px;
}

.view {
    flex: 1;
    min-height: 0;
    display: flex;
    margin: 0 2px 0 1px;
    background-color: #fff;
}

.drawing {
    flex: 1;
    min-width: 0;
    height: 100%;
}

.center-line {
    fill: none;
    stroke: #f23a3a;
}

.outline {
    fill: none;
    stroke: #333;
}

.grips {
    fill: #0a3cf5;
    stroke: #1b3a9a;
}

.cursor {
    stroke: #777;
}

.ucs path {
    fill: none;
    stroke: #444;
}

.ucs text {
    font-size: 10px;
    fill: #444;
}

.scroll {
    display: flex;
    background-color: #3e4d86;
}

.scroll button,
.thumb {
    width: 10px;
    height: 11px;
    display: flex;
    flex-shrink: 0;
    align-items: center;
    justify-content: center;
    background: linear-gradient(135deg, #f4f4f6, #d0d0d4);
}

.scroll .track {
    flex: 112;
}

.vertical {
    width: 10px;
    flex-direction: column;
    background: linear-gradient(90deg, #35426f, #4b5b98);
}

.vertical .track {
    flex: 64;
}

.vertical .before {
    flex: 169;
}

.horizontal .track:first-of-type {
    flex: 103;
}

.horizontal {
    background: linear-gradient(#35426f, #4b5b98);
}

/* model and layout tabs */
.sheet-bar {
    height: 11px;
    display: flex;
    margin: 0 12px 0 1px;
}

.sheet-nav {
    display: flex;
    gap: 1px;
    margin-right: 5px;
}

.sheet-nav button {
    width: 9px;
    height: 11px;
    display: flex;
    align-items: center;
    justify-content: center;
    background-color: #fafafc;
}

.sheets {
    flex: 1;
    display: flex;
    border-top: 1px solid #666;
}

.sheets button {
    height: 10px;
    padding: 0 4px;
    font: 7px/10px "Liberation Mono", monospace;
}

.sheets .active {
    margin-top: -1px;
    height: 11px;
    padding: 0 2px;
    background-color: #fff;
    font-weight: bold;
}

.slash {
    width: 6px;
    height: 10px;
    fill: none;
    stroke: #222;
}

.sheet-bar .scroll {
    width: 245px;
}

/* command bar */
.command {
    height: 176px;
    display: flex;
    padding-right: 1px;
}

.command-side {
    width: 17px;
    padding: 3px 0 4px;
    display: flex;
    flex-direction: column;
    align-items: center;
    background: linear-gradient(90deg, #fafaff, #e9e9fa);
}

.command-title {
    margin-top: 3px;
    writing-mode: vertical-rl;
    text-orientation: sideways;
    font-size: 9px;
}

.command-side button {
    margin-top: auto;
}

.command-body {
    flex: 1;
    min-width: 0;
    display: flex;
    flex-direction: column;
    border: solid #c5c8d6;
    border-width: 1px 0 0 1px;
    background-color: #fff;
    font: 9px/10px "Noto Sans CJK SC", sans-serif;
    color: #333;
}

.history {
    flex: 1;
    padding: 1px 0 0 1px;
    overflow: hidden;
}

.history p {
    margin: 0;
    white-space: nowrap;
}

.mono {
    font-family: "Liberation Mono", monospace;
    font-size: 8px;
}

.prompt {
    height: 12px;
    padding-left: 1px;
    display: flex;
    border-top: 2px solid #999;
}

.prompt input {
    flex: 1;
    min-width: 0;
    padding: 0 2px;
    border: none;
    outline: none;
    background: none;
    font: inherit;
}

.prompt .scroll {
    width: 46px;
}

/* status bar */
.status-bar {
    height: 14px;
    padding: 2px 0 0;
    display: flex;
    gap: 1px;
    background-color: #f0f0fd;
}

.coords {
    width: 166px;
    margin-right: 1px;
    border: 1px solid #777;
    font-size: 8px;
    line-height: 10px;
}

.status-bar button {
    padding: 0 2px;
    border: 1px solid transparent;
    border-right-color: #dcdcea;
    line-height: 10px;
}

.status-bar .pressed {
    border-color: #555 #fff #fff #555;
    background-color: #f7f7ff;
}

.status-bar .wide {
    padding: 0 3px;
}

.resize {
    width: 9px;
    height: 9px;
    margin: 2px 0 0 auto;
}
```
